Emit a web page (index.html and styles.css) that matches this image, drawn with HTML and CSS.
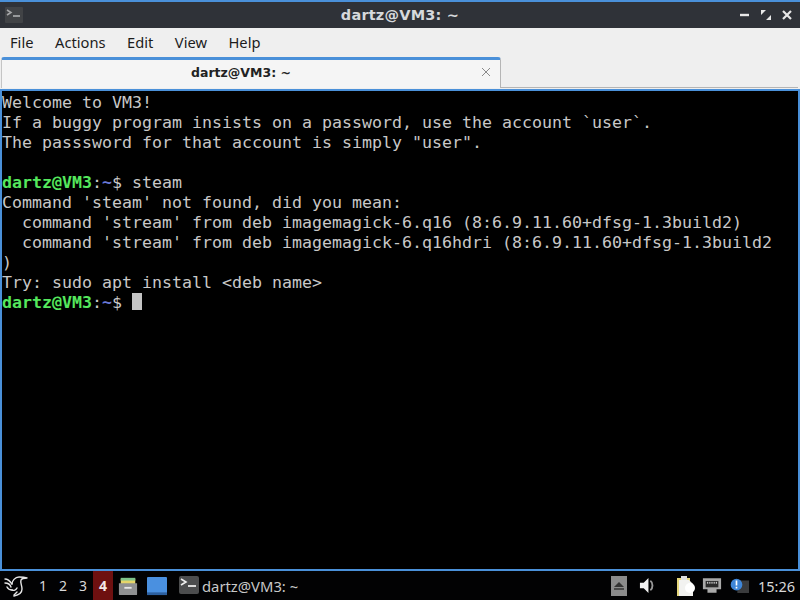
FILE: index.html
```html
<!DOCTYPE html>
<html lang="en">
<head>
<meta charset="utf-8">
<title>dartz@VM3: ~</title>
<link rel="stylesheet" href="styles.css">
</head>
<body>
<div class="window">
  <header class="titlebar">
    <span class="title-side">
      <svg class="term-icon-small" viewBox="0 0 18 16"><rect width="18" height="16" rx="1" fill="#4a4b4d"/><path d="M2 3l4 2.5L2 8" fill="none" stroke="#d8d8d8" stroke-width="1.5"/><path d="M8 9h7" stroke="#eee" stroke-width="1.5"/></svg>
    </span>
    <span class="title-text">dartz@VM3: ~</span>
    <span class="title-side wm-buttons">
      <svg class="wm" viewBox="0 0 12 12"><path d="M1 6h9" stroke="#e8e8e8" stroke-width="2.4"/></svg>
      <svg class="wm" viewBox="0 0 12 12"><path d="M1 1h5L1 6zM11 11H6l5-5z" fill="#e8e8e8"/><path d="M4 8l4-4" stroke="#2f3136" stroke-width="1"/></svg>
      <svg class="wm" viewBox="0 0 12 12"><path d="M2 2l8 8M10 2l-8 8" stroke="#e8e8e8" stroke-width="2.2"/></svg>
    </span>
  </header>
  <nav class="menubar">
    <span class="menu-item">File</span>
    <span class="menu-item">Actions</span>
    <span class="menu-item">Edit</span>
    <span class="menu-item">View</span>
    <span class="menu-item">Help</span>
  </nav>
  <div class="tabbar">
    <div class="tab">
      <span class="tab-label">dartz@VM3: ~</span>
      <svg class="tab-close" viewBox="0 0 10 10"><path d="M1 1l8 8M9 1l-8 8" stroke="#8a8a8a" stroke-width="1"/></svg>
    </div>
  </div>
  <main class="terminal">
<pre class="output">Welcome to VM3!
If a buggy program insists on a password, use the account `user`.
The passsword for that account is simply "user".

<span class="host">dartz@VM3</span>:<span class="path">~</span>$ steam
Command 'steam' not found, did you mean:
  command 'stream' from deb imagemagick-6.q16 (8:6.9.11.60+dfsg-1.3build2)
  command 'stream' from deb imagemagick-6.q16hdri (8:6.9.11.60+dfsg-1.3build2
)
Try: sudo apt install &lt;deb name&gt;
<span class="host">dartz@VM3</span>:<span class="path">~</span>$ <span class="cursor"> </span></pre>
  </main>
</div>
<footer class="taskbar">
  <svg class="logo" viewBox="0 0 24 22"><g fill="none" stroke="#e6e6e6" stroke-width="1.4" stroke-linecap="round" stroke-linejoin="round"><path d="M1 4c3 0 5 2 7 5"/><path d="M1 8c2 0 5 1 6 4"/><path d="M3 12c1 2 3 3 5 3"/><path d="M8 9c0-3 3-7 7-7 2 0 5 0 8 1-3 0-5 0-6 2-1 3 1 5 1 9 0 3-3 6-8 7"/><path d="M8 15c2 1 4 0 5-2"/><path d="M10 20l3-3"/></g></svg>
  <div class="workspaces">
    <span class="ws">1</span>
    <span class="ws">2</span>
    <span class="ws">3</span>
    <span class="ws ws-active">4</span>
  </div>
  <svg class="launcher" viewBox="0 0 22 20"><path d="M3 2h16v6H3z" fill="#e6d56a"/><path d="M3 1h16v3H3z" fill="#7fc48a"/><path d="M1 7h20v12a1 1 0 0 1-1 1H2a1 1 0 0 1-1-1z" fill="#8f9091"/><path d="M7 11h8v2H7z" fill="#e8e8e8"/></svg>
  <svg class="launcher launcher-desktop" viewBox="0 0 22 20"><rect width="22" height="20" rx="1" fill="#4a90e0"/><path d="M0 17h22v3H0z" fill="#2c5f9e"/></svg>
  <div class="task">
    <svg class="task-icon" viewBox="0 0 20 18"><rect width="20" height="18" rx="2" fill="#4c4d4e"/><path d="M2 3l5 3-5 3" fill="none" stroke="#eee" stroke-width="1.6"/><path d="M9 10h8" stroke="#fff" stroke-width="1.6"/></svg>
    <span class="task-label">dartz@VM3: ~</span>
  </div>
  <div class="tray">
    <svg class="tray-eject" viewBox="0 0 16 20"><rect width="16" height="20" fill="#8b8b8b"/><path d="M8 6l5 5H3z" fill="#333"/><path d="M3 13h10" stroke="#333" stroke-width="1.5"/></svg>
    <svg class="tray-sound" viewBox="0 0 18 18"><path d="M1 6h4l5-5v16l-5-5H1z" fill="#f2f2f2"/><path d="M12 4c3 2 3 8 0 10" fill="none" stroke="#999" stroke-width="2"/></svg>
    <svg class="tray-clip" viewBox="0 0 20 22"><path d="M1 3h13v18H1z" fill="#e6d77c"/><path d="M3 5h10l4 4v12H3z" fill="#f2f2f0"/><path d="M5 1h6v4H5z" fill="#ddd"/><circle cx="14" cy="13" r="5" fill="#fff"/></svg>
    <svg class="tray-net" viewBox="0 0 22 18"><path d="M1 1h20v12h-5v4H6v-4H1z" fill="#a9a9a9"/><rect x="4" y="4" width="14" height="7" fill="#2a2a2a"/><path d="M6 5v2M8 5v2M10 5v2M12 5v2M14 5v2M16 5v2" stroke="#ddd" stroke-width="1"/></svg>
    <svg class="tray-update" viewBox="0 0 24 20"><rect x="10" y="4" width="14" height="15" fill="#3a3b3d"/><circle cx="9" cy="9" r="7" fill="#3f86d8"/><path d="M9 4v6M9 11.5v2" stroke="#fff" stroke-width="2"/></svg>
    <span class="clock">15:26</span>
  </div>
</footer>
</body>
</html>
```
FILE: styles.css
```css
* { box-sizing: border-box; }
html, body { height: 100%; margin: 0; }
body {
  display: flex;
  flex-direction: column;
  background: #000;
  font-family: "Noto Sans", "DejaVu Sans", sans-serif;
  overflow: hidden;
}
.window {
  flex: 1;
  display: flex;
  flex-direction: column;
  min-height: 0;
  border-top: 2px solid #4a90d9;
  border-bottom: 2px solid #4a90d9;
}
.titlebar {
  height: 26px;
  background: #2f3238;
  display: flex;
  align-items: center;
  justify-content: space-between;
  color: #d6d9dc;
}
.title-side {
  width: 100px;
  display: flex;
  align-items: center;
  padding-left: 5px;
}
.term-icon-small { width: 18px; height: 16px; opacity: .7; }
.title-text {
  font: bold 14.5px "DejaVu Sans", sans-serif;
  letter-spacing: .2px;
}
.wm-buttons {
  justify-content: flex-end;
  gap: 9px;
  padding: 0 7px 0 0;
}
.wm { width: 12px; height: 12px; }
.menubar {
  height: 29px;
  background: #efefef;
  display: flex;
  align-items: center;
  gap: 21.5px;
  padding-left: 10px;
  font-size: 14.7px;
  color: #1c1c1c;
}
.menu-item { line-height: 29px; }
.tabbar {
  height: 34px;
  background: #efefef;
  padding: 0 0 0 1px;
  border-bottom: 2px solid #4a90d9;
  position: relative;
}
.tabbar::before {
  content: "";
  position: absolute;
  left: 100px;
  right: 2px;
  bottom: 1px;
  height: 1px;
  background: #b5b5b5;
}
.tab {
  width: 500px;
  height: 31px;
  background: #f5f5f5;
  border-top: 3px solid #4a90d9;
  border-right: 1px solid #b5b5b5;
  border-left: 1px solid #c5c5c5;
  border-radius: 3px 3px 0 0;
  display: flex;
  align-items: center;
  justify-content: center;
  position: relative;
  z-index: 1;
}
.tab-label {
  font: bold 12.5px "DejaVu Sans", sans-serif;
  color: #222;
  position: relative;
  left: -10px;
  top: -2px;
}
.tab-close { position: absolute; right: 9px; top: 7px; width: 10px; height: 10px; }
.terminal {
  flex: 1;
  min-height: 0;
  background: #000;
  border-left: 2px solid #4a90d9;
  border-right: 2px solid #4a90d9;
  padding-top: 2px;
}
.output {
  margin: 0;
  font: 16.62px/20px "DejaVu Sans Mono", monospace;
  color: #c8c8c8;
}
.host { color: #55e85d; font-weight: bold; }
.path { color: #6a78d8; font-weight: bold; }
.cursor { display: inline-block; width: 10px; height: 17px; background: #c4c4c4; vertical-align: 0; }
.taskbar {
  height: 29px;
  flex: none;
  background: #020203;
  display: flex;
  align-items: center;
  color: #d8d8d8;
  font-size: 14px;
}
.logo { width: 24px; height: 22px; margin-left: 4px; flex: none; }
.workspaces { display: flex; align-self: stretch; margin-left: 5px; }
.ws {
  width: 20px;
  display: flex;
  align-items: center;
  justify-content: center;
  font-size: 14px;
}
.ws-active { background: #6e1010; color: #f3e7e7; font-weight: bold; }
.launcher { width: 20px; height: 20px; margin-left: 5px; flex: none; }
.launcher-desktop { margin-left: 9px; }
.task { display: flex; align-items: center; gap: 3px; margin-left: 12px; }
.task-icon { width: 20px; height: 18px; position: relative; top: -1px; }
.task-label { font-size: 14.8px; color: #c8c8c8; }
.tray { margin-left: auto; display: flex; align-items: center; }
.tray-eject { width: 16px; height: 20px; }
.tray-sound { width: 17px; height: 17px; margin-left: 12px; }
.tray-clip { width: 20px; height: 22px; margin-left: 20px; }
.tray-net { width: 20px; height: 17px; margin-left: 6px; }
.tray-update { width: 20px; height: 17px; margin-left: 7px; }
.clock { font-size: 14.5px; color: #d8d8d8; margin: 0 5px 0 9px; }
```
